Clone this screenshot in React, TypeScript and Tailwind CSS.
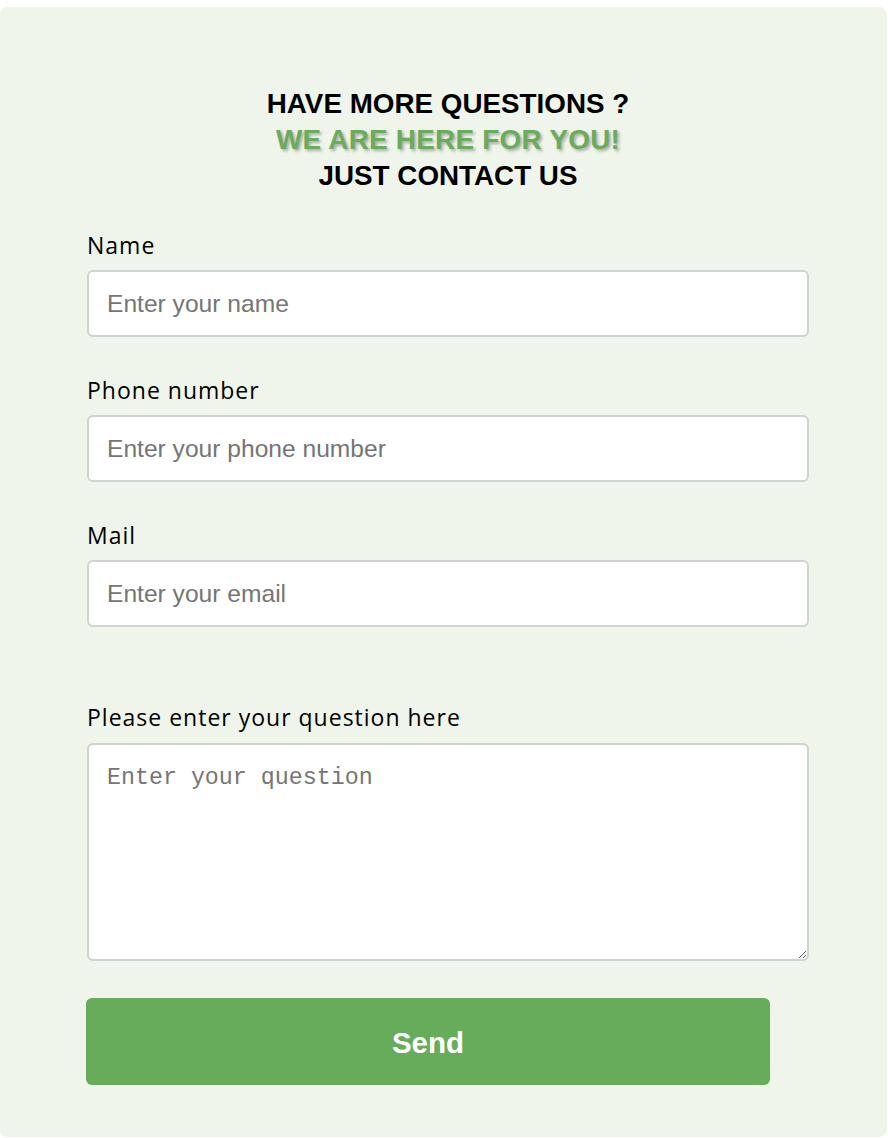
import React from "react";

export default function App() {
  const labelCls =
    "block text-[23px] leading-[28px] text-black font-medium font-['Open_Sans',sans-serif] tracking-[1px]";
  const inputCls =
    "block w-[722px] h-[67px] rounded-[6px] border-2 border-[#d2d2d2] bg-white px-[18px] text-[24.6px] font-['Liberation_Sans',Arial,sans-serif] text-black placeholder:text-[#757575] outline-none";
  return (
    <div className="w-[888px] min-h-[1138px] bg-white pt-[7px]">
      <div className="w-[887px] h-[1130px] rounded-[8px] bg-[#eff5ea] pl-[87px] pt-[79px]">
        <div className="w-[722px] text-center font-['Liberation_Sans',Arial,sans-serif] font-bold text-[27.8px] leading-[36px] uppercase">
          <div className="text-black">Have more questions ?</div>
          <div className="text-[#6aab5d] tracking-[0.3px] [text-shadow:2px_2px_3px_rgba(0,0,0,0.3)]">
            We are here for you!
          </div>
          <div className="text-black">Just contact us</div>
        </div>

        <div className="mt-[37px]">
          <label className={labelCls}>Name</label>
          <input className={`${inputCls} mt-[11px]`} placeholder="Enter your name" />
        </div>
        <div className="mt-[39px]">
          <label className={labelCls}>Phone number</label>
          <input className={`${inputCls} mt-[11px]`} placeholder="Enter your phone number" />
        </div>
        <div className="mt-[39px]">
          <label className={labelCls}>Mail</label>
          <input className={`${inputCls} mt-[11px]`} placeholder="Enter your email" />
        </div>
        <div className="mt-[76px]">
          <label className={labelCls}>Please enter your question here</label>
          <textarea
            className="block mt-[12px] w-[722px] h-[218px] rounded-[6px] border-2 border-[#d2d2d2] bg-white px-[18px] pt-[19px] text-[23.3px] leading-[28px] font-['Liberation_Mono','DejaVu_Sans_Mono',monospace] placeholder:text-[#757575] outline-none"
            placeholder="Enter your question"
          />
        </div>
        <button className="mt-[37px] -ml-px block w-[684px] h-[87px] rounded-[6px] bg-[#67ac5b] text-white font-bold text-[29.5px] leading-none pt-[2px] font-['Liberation_Sans',Arial,sans-serif]">
          Send
        </button>
      </div>
    </div>
  );
}
